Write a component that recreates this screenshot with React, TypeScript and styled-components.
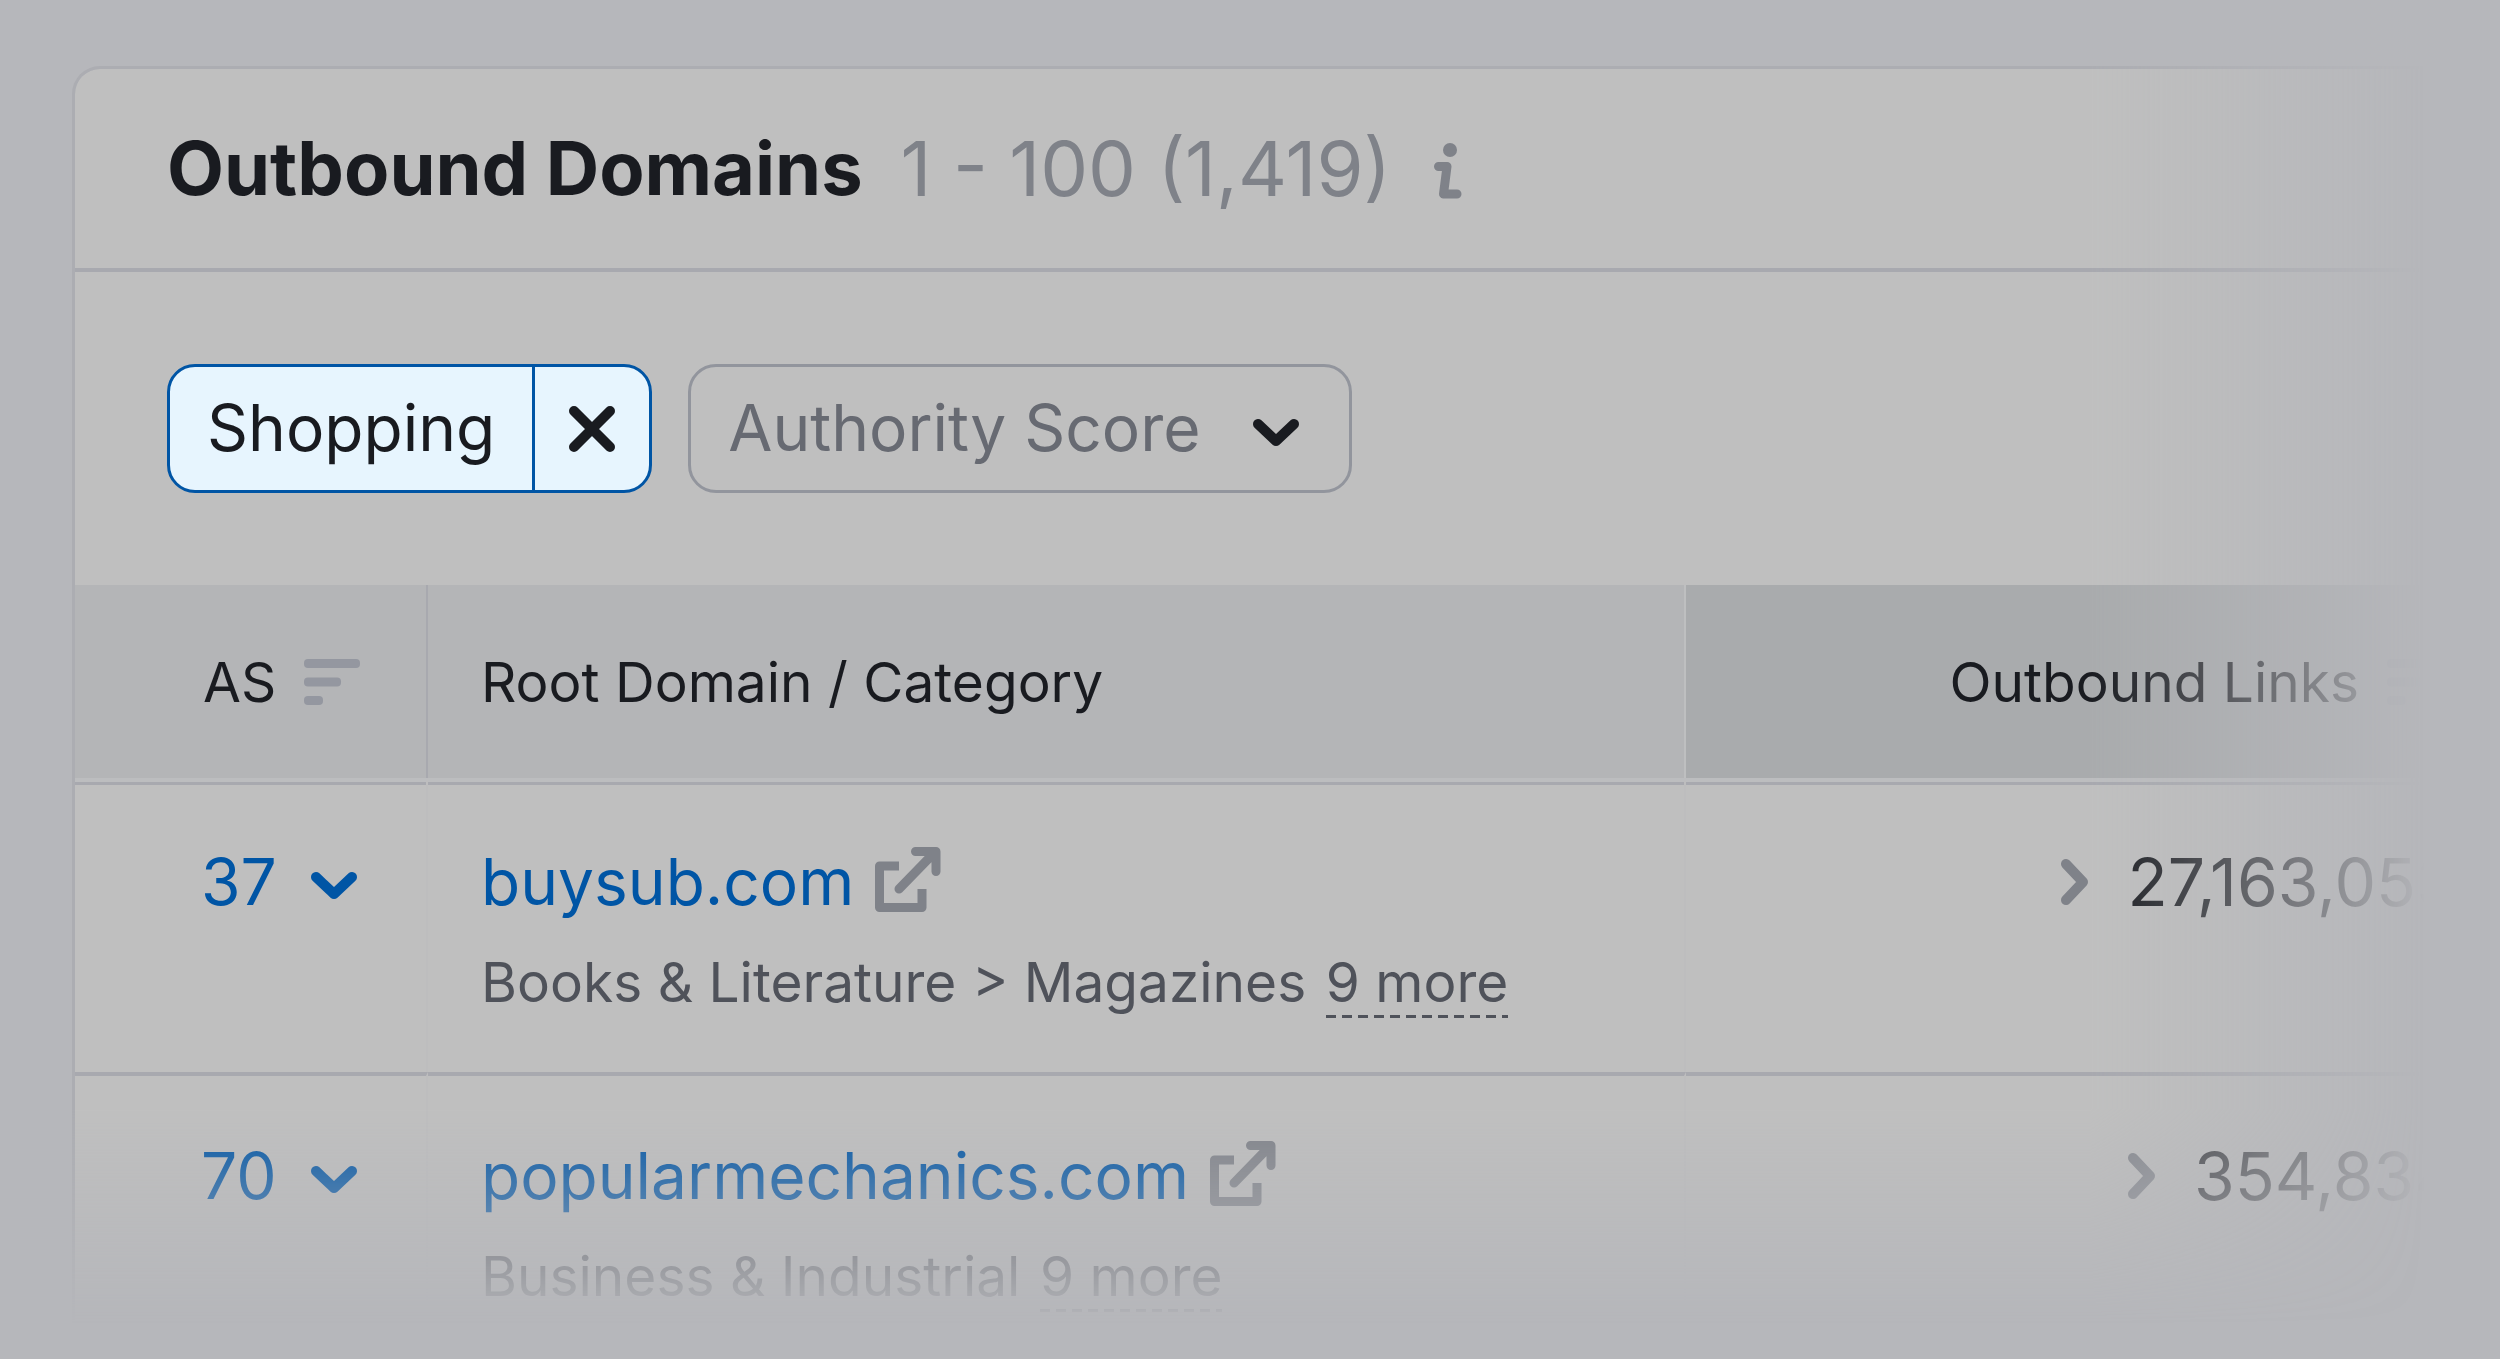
import React from "react";
import styled, { createGlobalStyle } from "styled-components";

const color = {
  page: "#b6b7bb",
  card: "#bfbfbf",
  border: "#a8a9af",
  outline: "#92959d",
  head: "#b4b5b7",
  headActive: "#a9abad",
  text: "#191b20",
  secondary: "#4f525a",
  muted: "#7f8289",
  placeholder: "#676a72",
  icon: "#9497a0",
  link: "#0055a5",
  chip: "#e7f5fe",
};

const GlobalStyle = createGlobalStyle`
  *, *::before, *::after { box-sizing: border-box; }
  body {
    margin: 0;
    background: ${color.page};
    color: ${color.text};
    font-family: Inter, "Liberation Sans", sans-serif;
    font-optical-sizing: none;
  }
  button, select { font: inherit; color: inherit; margin: 0; }
`;

const Page = styled.main`
  min-height: 100vh;
  padding: 66px 75px 0 72px;
  overflow: hidden;
`;

const Frame = styled.div`
  overflow: hidden;
  mask-image:
    linear-gradient(to right, #000 calc(100% - 335px), transparent 100%),
    linear-gradient(to bottom, #000 calc(100% - 215px), transparent 100%);
  mask-composite: intersect;
`;

const Card = styled.section`
  width: calc(100% + 75px);
  border: 3px solid #acadb2;
  border-width: 3px 0 0 3px;
  border-top-left-radius: 28px;
  background: ${color.card};
  background-clip: padding-box;
`;

const CardHeader = styled.header`
  display: flex;
  align-items: center;
  gap: 38px;
  padding: 56px 92px;
  border-bottom: 4px solid ${color.border};
  font-size: 74px;
  line-height: 87px;
`;

const Title = styled.h2`
  margin: 0;
  font-size: inherit;
  font-weight: 700;
`;

const Range = styled.span`
  color: ${color.muted};
  font-size: 76px;
`;

const PlainButton = styled.button`
  display: inline-flex;
  align-items: center;
  padding: 0;
  border: 0;
  background: none;
  cursor: pointer;
`;

const InfoButton = styled(PlainButton)`
  color: ${color.muted};
`;

const Filters = styled.div`
  display: flex;
  gap: 36px;
  padding: 92px;
  font-size: 64px;
`;

const Chip = styled.div`
  display: flex;
  height: 129px;
  border: 3px solid ${color.link};
  border-radius: 28px;
  background: ${color.chip};
`;

const ChipLabel = styled(PlainButton)`
  padding: 0 37px 2px;
`;

const ChipRemove = styled(PlainButton)`
  justify-content: center;
  width: 117px;
  border-left: 3px solid ${color.link};
`;

const SelectBox = styled.label`
  display: grid;
  grid-template-areas: "control";
  align-items: center;
  color: ${color.placeholder};

  & > svg {
    grid-area: control;
    justify-self: end;
    margin-right: 52px;
    color: ${color.text};
    pointer-events: none;
  }
`;

const Select = styled.select`
  grid-area: control;
  width: 664px;
  height: 129px;
  padding: 0 37px 2px;
  appearance: none;
  border: 3px solid ${color.outline};
  border-radius: 28px;
  background: none;
`;

const Table = styled.table`
  width: 100%;
  border-collapse: separate;
  border-spacing: 0;
`;

const HeadCell = styled.th<{ $size?: string; $active?: boolean; $divider?: string }>`
  width: ${(p) => p.$size ?? "auto"};
  height: 193px;
  padding: 0 57px 0 53px;
  border-right: ${(p) => (p.$divider ? `2px solid ${p.$divider}` : "0")};
  background: ${(p) => (p.$active ? color.headActive : color.head)};
  font-size: 55px;
  font-weight: 400;
  text-align: left;

  &:first-child { padding: 0 0 0 128px; }
`;

const Line = styled.div<{ $end?: boolean; $gap: number }>`
  display: flex;
  align-items: center;
  justify-content: ${(p) => (p.$end ? "flex-end" : "flex-start")};
  gap: ${(p) => p.$gap}px;
`;

const SortButton = styled(PlainButton)`
  color: ${color.icon};
`;

const Row = styled.tr`
  & > td { border-top: 4px solid ${color.border}; }
  &:first-child > td {
    border-top-color: #bcbdbf;
    box-shadow: inset 0 3px 0 ${color.border};
  }
  &:last-child > td { padding-bottom: 14px; }
`;

const Cell = styled.td<{ $plain?: boolean }>`
  padding: 61px 43px 56px 53px;
  border-right: ${(p) => (p.$plain ? "0" : "2px solid #bdbdbe")};
  vertical-align: top;
  font-size: ${(p) => (p.$plain ? 66 : 64)}px;
  line-height: 78px;

  &:first-child { padding-left: 126px; padding-right: 0; }
`;

const ScoreButton = styled(PlainButton)`
  gap: 33px;
  color: ${color.link};
`;

const DomainLink = styled.a`
  color: ${color.link};
  text-decoration: none;
`;

const ExternalLink = styled.a`
  display: inline-flex;
  color: ${color.muted};
`;

const Category = styled.p`
  height: 68px;
  margin: 27px 0 0;
  color: ${color.secondary};
  font-size: 55px;
  line-height: 68px;
  white-space: nowrap;
`;

const MoreButton = styled.button`
  margin-left: 4px;
  padding: 0 0 3px;
  border: 0;
  background: repeating-linear-gradient(to right, currentColor 0 10px, transparent 10px 16px)
    left bottom / 100% 3px no-repeat;
  line-height: 66px;
  cursor: pointer;
`;

const ExpandButton = styled(PlainButton)`
  color: ${color.muted};
`;

const stroke = {
  fill: "none",
  stroke: "currentColor",
  strokeLinecap: "round" as const,
  strokeLinejoin: "round" as const,
};

const InfoIcon = () => (
  <svg width="33" height="61" viewBox="-5 -5 33 61" aria-hidden="true">
    <circle cx="16" cy="7" r="7" fill="currentColor" />
    <path {...stroke} strokeWidth={9} d="M4.500 23.500H13L9.500 51H23" />
  </svg>
);

const CloseIcon = () => (
  <svg width="48" height="48" viewBox="0 0 48 48" aria-hidden="true">
    <path {...stroke} strokeWidth={10} d="M6 6L42 42M42 6L6 42" />
  </svg>
);

const ChevronDown = () => (
  <svg width="48" height="36" viewBox="0 0 48 36" aria-hidden="true">
    <path {...stroke} strokeWidth={10} d="M6 13L24 30L42 13" />
  </svg>
);

const ChevronRight = () => (
  <svg width="32" height="48" viewBox="0 0 32 48" aria-hidden="true">
    <path {...stroke} strokeWidth={10} d="M7 6L24 24L7 42" />
  </svg>
);

const SortIcon = () => (
  <svg width="56" height="46" viewBox="0 0 56 46" fill="currentColor" aria-hidden="true">
    <rect width="56" height="9" rx="4" />
    <rect y="18.500" width="37" height="9" rx="4" />
    <rect y="37" width="19" height="9" rx="4" />
  </svg>
);

const ExternalIcon = () => (
  <svg width="66" height="70" viewBox="0 0 66 70" aria-hidden="true">
    <path {...stroke} strokeWidth={9} strokeLinecap="butt" d="M24 19H4.500V60.500H47V42" />
    <path {...stroke} strokeWidth={9} d="M24 42L60 5M40.500 4.500H61V24.500" />
  </svg>
);

type Domain = { score: number; domain: string; category: string; more: number; links: string };

const domains: Domain[] = [
  { score: 37, domain: "buysub.com", category: "Books & Literature > Magazines", more: 9, links: "27,163,053" },
  { score: 70, domain: "popularmechanics.com", category: "Business & Industrial", more: 9, links: "354,834" },
];

export default function App() {
  return (
    <>
      <GlobalStyle />
      <Page>
        <Frame>
          <Card>
            <CardHeader>
              <Title>Outbound Domains</Title>
              <Range>1 - 100 (1,419)</Range>
              <InfoButton type="button" aria-label="About outbound domains">
                <InfoIcon />
              </InfoButton>
            </CardHeader>
            <Filters>
              <Chip>
                <ChipLabel type="button">Shopping</ChipLabel>
                <ChipRemove type="button" aria-label="Remove Shopping filter">
                  <CloseIcon />
                </ChipRemove>
              </Chip>
              <SelectBox>
                <Select aria-label="Authority Score" defaultValue="any">
                  <option value="any">Authority Score</option>
                </Select>
                <ChevronDown />
              </SelectBox>
            </Filters>
            <Table>
              <thead>
                <tr>
                  <HeadCell $size="353px" $divider={color.border}>
                    <Line $gap={28}>
                      AS
                      <SortButton type="button" aria-label="Sort by authority score">
                        <SortIcon />
                      </SortButton>
                    </Line>
                  </HeadCell>
                  <HeadCell $size="1258px" $divider="#bebfc0">Root Domain / Category</HeadCell>
                  <HeadCell $active>
                    <Line $end $gap={28}>
                      Outbound Links
                      <SortButton type="button" aria-label="Sort by outbound links">
                        <SortIcon />
                      </SortButton>
                    </Line>
                  </HeadCell>
                </tr>
              </thead>
              <tbody>
                {domains.map((d) => (
                  <Row key={d.domain}>
                    <Cell>
                      <ScoreButton type="button">
                        {d.score}
                        <ChevronDown />
                      </ScoreButton>
                    </Cell>
                    <Cell>
                      <Line $gap={21}>
                        <DomainLink href={`#${d.domain}`}>{d.domain}</DomainLink>
                        <ExternalLink href={`#open-${d.domain}`} aria-label={`Open ${d.domain}`}>
                          <ExternalIcon />
                        </ExternalLink>
                      </Line>
                      <Category>
                        {d.category} <MoreButton type="button">{d.more} more</MoreButton>
                      </Category>
                    </Cell>
                    <Cell $plain>
                      <Line $end $gap={36}>
                        <ExpandButton type="button" aria-label={`Expand links of ${d.domain}`}>
                          <ChevronRight />
                        </ExpandButton>
                        {d.links}
                      </Line>
                    </Cell>
                  </Row>
                ))}
              </tbody>
            </Table>
          </Card>
        </Frame>
      </Page>
    </>
  );
}
